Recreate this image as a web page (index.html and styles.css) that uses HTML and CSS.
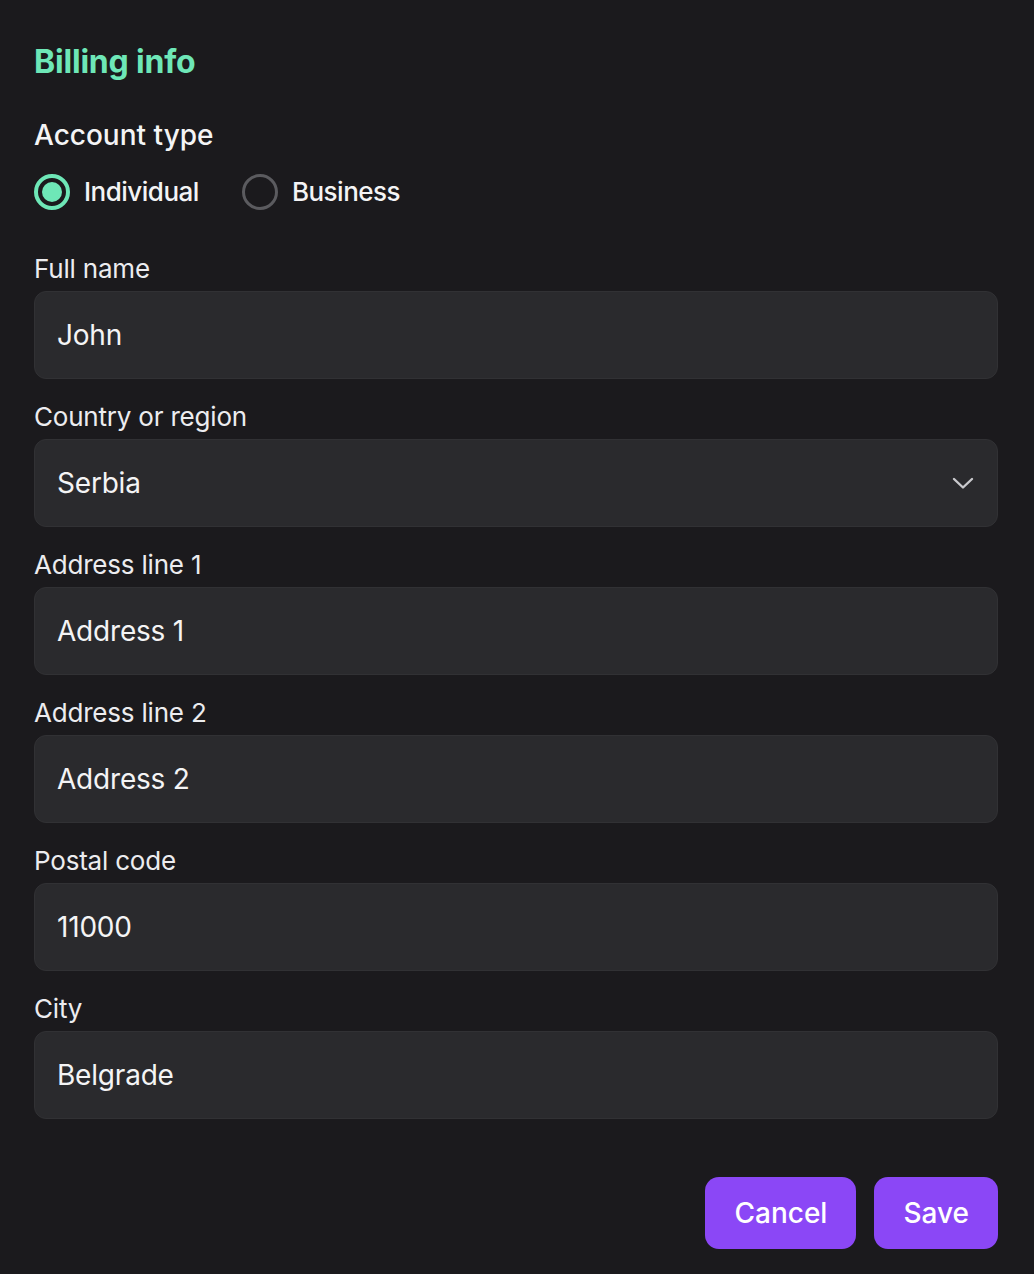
FILE: index.html
```html
<!DOCTYPE html>
<html lang="en">
<head>
<meta charset="utf-8">
<title>Billing info</title>
<link rel="stylesheet" href="styles.css">
</head>
<body>
<form class="billing">
  <h1 class="title">Billing info</h1>
  <h2 class="section">Account type</h2>
  <div class="radios">
    <label class="radio">
      <span class="dot checked"></span>
      <span class="radio-text">Individual</span>
    </label>
    <label class="radio">
      <span class="dot"></span>
      <span class="radio-text">Business</span>
    </label>
  </div>

  <div class="field first">
    <div class="label">Full name</div>
    <div class="input">John</div>
  </div>
  <div class="field">
    <div class="label">Country or region</div>
    <div class="input select">
      <span>Serbia</span>
      <svg class="chevron" width="24" height="16" viewBox="0 0 24 16" fill="none">
        <path d="M3 4 L12 12.5 L21 4" stroke="#c9c9cd" stroke-width="2.4" stroke-linecap="round" stroke-linejoin="round"/>
      </svg>
    </div>
  </div>
  <div class="field">
    <div class="label">Address line 1</div>
    <div class="input">Address 1</div>
  </div>
  <div class="field">
    <div class="label">Address line 2</div>
    <div class="input">Address 2</div>
  </div>
  <div class="field">
    <div class="label">Postal code</div>
    <div class="input">11000</div>
  </div>
  <div class="field">
    <div class="label">City</div>
    <div class="input">Belgrade</div>
  </div>

  <div class="actions">
    <button type="button" class="btn">Cancel</button>
    <button type="button" class="btn">Save</button>
  </div>
</form>
</body>
</html>
```

FILE: styles.css
```css
html, body {
  margin: 0;
  padding: 0;
  background: #1b1a1d;
}
body {
  font-family: Inter, "Noto Sans", sans-serif;
  color: #f4f4f5;
}
.billing {
  padding: 42px 36px 0 34px;
  display: flex;
  flex-direction: column;
}
.title {
  margin: 0;
  font-size: 32px;
  line-height: 40px;
  font-weight: 700;
  color: #6ee7b7;
  letter-spacing: -0.2px;
}
.section {
  margin: 35px 0 0;
  font-size: 28px;
  line-height: 36px;
  font-weight: 500;
  color: #f4f4f5;
}
.radios {
  margin-top: 21px;
  display: flex;
  gap: 43px;
}
.radio {
  display: flex;
  align-items: center;
  gap: 14px;
  height: 36px;
}
.radio-text {
  font-size: 26px;
  line-height: 36px;
  font-weight: 500;
  letter-spacing: -0.5px;
  color: #f4f4f5;
}
.dot {
  box-sizing: border-box;
  width: 36px;
  height: 36px;
  border-radius: 50%;
  border: 3px solid #5b5b5f;
  display: flex;
  align-items: center;
  justify-content: center;
}
.dot.checked {
  border: 4px solid #6ee7b7;
}
.dot.checked::after {
  content: "";
  width: 20px;
  height: 20px;
  border-radius: 50%;
  background: #6ee7b7;
}
.field {
  margin-top: 22px;
  display: flex;
  flex-direction: column;
  gap: 6px;
}
.field.first {
  margin-top: 43px;
}
.label {
  font-size: 26px;
  line-height: 32px;
  letter-spacing: -0.2px;
  color: #ececef;
}
.input {
  box-sizing: border-box;
  height: 88px;
  border-radius: 12px;
  background: #2a2a2d;
  border: 1px solid #313134;
  padding: 0 22px;
  display: flex;
  align-items: center;
  font-size: 28px;
  line-height: 34px;
  letter-spacing: -0.2px;
  color: #f4f4f5;
}
.select {
  justify-content: space-between;
}
.actions {
  margin-top: 58px;
  display: flex;
  justify-content: flex-end;
  gap: 18px;
}
.btn {
  height: 72px;
  padding: 0 29px;
  border: none;
  border-radius: 14px;
  background: #8b47f6;
  color: #ffffff;
  font-family: Inter, "Noto Sans", sans-serif;
  font-size: 28px;
  font-weight: 500;
}
```
